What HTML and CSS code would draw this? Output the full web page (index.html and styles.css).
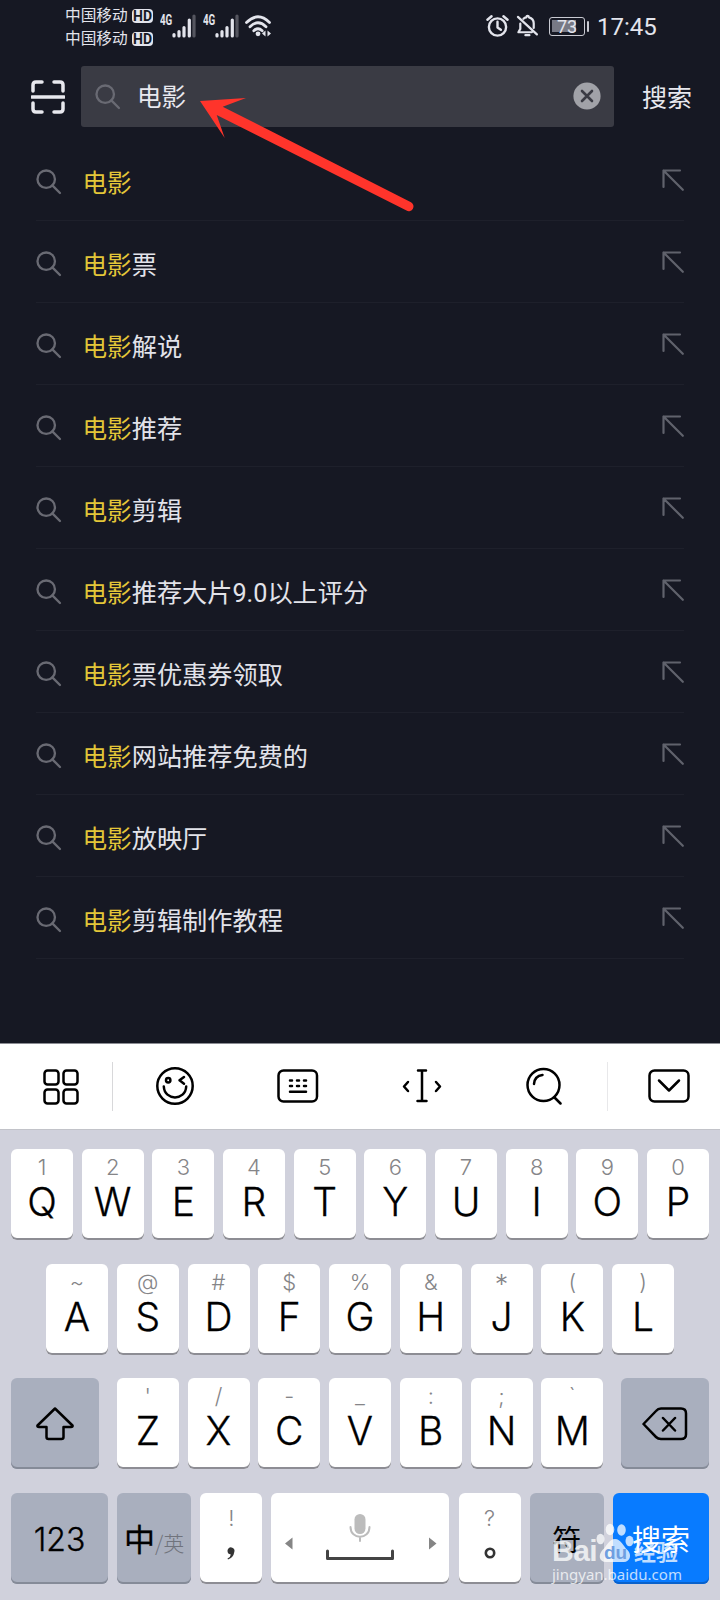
FILE: index.html
```html
<!DOCTYPE html>
<html lang="zh-CN">
<head>
<meta charset="utf-8">
<title>搜索</title>
<link rel="stylesheet" href="styles.css">
</head>
<body>
<svg class="defs" aria-hidden="true">
  <symbol id="mag" viewBox="0 0 28 28"><circle cx="11" cy="11" r="9.4"/><path d="M17.6 17.6L25.8 25.8"/></symbol>
  <symbol id="fill" viewBox="0 0 22 22"><path d="M1.5 18V1.5H18M1.5 1.5L20.8 20.8"/></symbol>
  <symbol id="signal" viewBox="0 0 24 24"><path d="M2 20.5V22M7 17.5V22M12 13.5V22M17.3 6V22"/><path d="M22 2V22" opacity=".3"/></symbol>
</svg>
<div class="phone">
  <header class="status">
    <div class="carriers">
      <div class="carrier">中国移动<span class="hd">HD</span></div>
      <div class="carrier">中国移动<span class="hd">HD</span></div>
    </div>
    <div class="net"><span>4G</span><svg class="signal"><use href="#signal"/></svg></div>
    <div class="net"><span>4G</span><svg class="signal"><use href="#signal"/></svg></div>
    <svg class="wifi" viewBox="0 0 28 24"><path d="M1.5 8.5Q13 -3 24.5 8.5M5 12.7Q13 5 21 12.7M8.8 16.7Q13 12.7 17.2 16.7"/><circle cx="13" cy="19.8" r="2.4"/><path class="solid" d="M20.5 16.5V22.5L17 19.5ZM22.5 16.5V22.5L26 19.5Z"/></svg>
    <svg class="alarm" viewBox="0 0 24 24"><circle cx="12" cy="13" r="9"/><path d="M12 7.5V13.5L15.5 16M1.5 5.5L5.8 1.8M22.5 5.5L18.2 1.8"/></svg>
    <svg class="bell" viewBox="0 0 24 24"><path d="M4.5 9.5V15L2.5 18.5H16.5M7.8 4.4Q9 3.2 10.7 3C11 1 13.2 1 13.5 3C17.5 4 18.5 7 18.5 9.5V14M2 2.5L21.8 20.8M9.8 21.6H14"/></svg>
    <div class="battery">73</div>
    <div class="clock">17:45</div>
  </header>

  <div class="searchbar">
    <svg class="scan" viewBox="0 0 34 34"><path d="M2 11V5Q2 2 5 2H11M23 2H29Q32 2 32 5V11M32 23V29Q32 32 29 32H23M11 32H5Q2 32 2 29V23M1 17H33"/></svg>
    <div class="field">
      <svg class="mag"><use href="#mag"/></svg>
      <span class="query">电影</span>
      <svg class="clear" viewBox="0 0 28 28"><circle cx="14" cy="14" r="13.6"/><path d="M9 9L19 19M19 9L9 19"/></svg>
    </div>
    <span class="go">搜索</span>
  </div>

  <ul class="list">
    <li><svg class="mag"><use href="#mag"/></svg><p><b>电影</b></p><svg class="fill"><use href="#fill"/></svg></li>
    <li><svg class="mag"><use href="#mag"/></svg><p><b>电影</b>票</p><svg class="fill"><use href="#fill"/></svg></li>
    <li><svg class="mag"><use href="#mag"/></svg><p><b>电影</b>解说</p><svg class="fill"><use href="#fill"/></svg></li>
    <li><svg class="mag"><use href="#mag"/></svg><p><b>电影</b>推荐</p><svg class="fill"><use href="#fill"/></svg></li>
    <li><svg class="mag"><use href="#mag"/></svg><p><b>电影</b>剪辑</p><svg class="fill"><use href="#fill"/></svg></li>
    <li><svg class="mag"><use href="#mag"/></svg><p><b>电影</b>推荐大片9.0以上评分</p><svg class="fill"><use href="#fill"/></svg></li>
    <li><svg class="mag"><use href="#mag"/></svg><p><b>电影</b>票优惠券领取</p><svg class="fill"><use href="#fill"/></svg></li>
    <li><svg class="mag"><use href="#mag"/></svg><p><b>电影</b>网站推荐免费的</p><svg class="fill"><use href="#fill"/></svg></li>
    <li><svg class="mag"><use href="#mag"/></svg><p><b>电影</b>放映厅</p><svg class="fill"><use href="#fill"/></svg></li>
    <li><svg class="mag"><use href="#mag"/></svg><p><b>电影</b>剪辑制作教程</p><svg class="fill"><use href="#fill"/></svg></li>
  </ul>

  <div class="tools">
    <div class="tool first"><svg width="36" height="36" viewBox="0 0 36 36"><rect x="1.5" y="1.5" width="14" height="14" rx="3"/><rect x="20.5" y="1.5" width="14" height="14" rx="3"/><rect x="1.5" y="20.5" width="14" height="14" rx="3"/><rect x="20.5" y="20.5" width="14" height="14" rx="3"/></svg></div>
    <div class="tool"><svg width="38" height="38" viewBox="0 0 38 38"><circle cx="19" cy="19" r="17.7"/><path d="M7.8 19.5C8.5 34 29.5 34 30.2 19.5M28 10L23.5 13.3L28 16.7"/><circle class="dot" cx="12.2" cy="13.3" r="2.2"/></svg></div>
    <div class="tool"><svg width="42" height="34" viewBox="0 0 42 34"><rect x="1.5" y="1.5" width="38.5" height="31" rx="5"/><path d="M13 11.5H15M20 11.5H22M27 11.5H29M13 17H15M20 17H22M27 17H29M13 22.7H29"/></svg></div>
    <div class="tool"><svg width="40" height="34" viewBox="0 0 40 34"><path d="M16 1.5H24M20 1.5V32M15.5 32H24.5M6 13L2 17.5L6 22M34 13L38 17.5L34 22"/></svg></div>
    <div class="tool"><svg width="36" height="38" viewBox="0 0 36 38"><circle cx="17.5" cy="18" r="16"/><path d="M28.5 30.5L34.5 36.5M8 17Q8.5 9 16.5 8"/></svg></div>
    <div class="tool last"><svg width="42" height="34" viewBox="0 0 42 34"><rect x="1.5" y="1.5" width="39" height="31" rx="5"/><path d="M11 11.5L21 21.5L31 11.5"/></svg></div>
  </div>

  <div class="keyboard">
    <div class="row">
      <div class="key"><i>1</i>Q</div><div class="key"><i>2</i>W</div><div class="key"><i>3</i>E</div><div class="key"><i>4</i>R</div><div class="key"><i>5</i>T</div><div class="key"><i>6</i>Y</div><div class="key"><i>7</i>U</div><div class="key"><i>8</i>I</div><div class="key"><i>9</i>O</div><div class="key"><i>0</i>P</div>
    </div>
    <div class="row">
      <div class="key"><i>~</i>A</div><div class="key"><i>@</i>S</div><div class="key"><i>#</i>D</div><div class="key"><i>$</i>F</div><div class="key"><i>%</i>G</div><div class="key"><i>&amp;</i>H</div><div class="key"><i class="star">*</i>J</div><div class="key"><i>(</i>K</div><div class="key"><i>)</i>L</div>
    </div>
    <div class="row spread">
      <div class="key gray wide"><svg width="38" height="34" viewBox="0 0 38 34"><path d="M19 1.5L36.5 18.5Q37 20 35 20H27.5V30Q27.5 32 25.5 32H12.5Q10.5 32 10.5 30V20H3Q1 20 1.5 18.5Z"/></svg></div>
      <div class="row">
        <div class="key"><i>'</i>Z</div><div class="key"><i>/</i>X</div><div class="key"><i>-</i>C</div><div class="key"><i>_</i>V</div><div class="key"><i>:</i>B</div><div class="key"><i>;</i>N</div><div class="key"><i>`</i>M</div>
      </div>
      <div class="key gray wide"><svg width="46" height="34" viewBox="0 0 46 34"><path d="M1.5 17L14 4Q16 1.5 19 1.5H39Q44 1.5 44 6.5V27.5Q44 32 39 32H19Q16 32 14 30Z M21 11L33 23.5M33 11L21 23.5"/></svg></div>
    </div>
    <div class="row spread">
      <div class="key gray num">123</div>
      <div class="key gray lang"><span>中</span><small>/英</small></div>
      <div class="key punct"><i>!</i><svg width="10" height="14" viewBox="0 0 10 14"><path class="ink" d="M1.5 4A3.5 3.5 0 1 1 8.3 5Q7.5 10.5 2 12.5L1.5 11.5Q4.8 9.8 4.8 7.5Q1.5 7 1.5 4Z"/></svg></div>
      <div class="key space">
        <svg width="162" height="56" viewBox="0 0 162 56"><path class="tri" d="M0 32.5L7.5 26.5V38.5ZM151.5 32.5L144 26.5V38.5Z"/><rect class="mic" x="69.5" y="3" width="11" height="20" rx="5.5"/><path class="stand" d="M65.5 16C65.5 29 84.5 29 84.5 16M75 26V30"/><path class="bar" d="M42.5 40V47.5H107.500V40"/></svg>
      </div>
      <div class="key punct"><i>?</i><svg width="12" height="12" viewBox="0 0 12 12"><circle class="ring" cx="6" cy="6" r="4.2"/></svg></div>
      <div class="key gray sym">符</div>
      <div class="key blue">搜索</div>
    </div>
  </div>

  <svg class="pointer" viewBox="0 0 220 120"><path d="M2 6L48 3L24.7 11.7L213 107.3A4.7 4.7 0 0 1 208.5 115.6L18.7 20L26.7 43Z"/></svg>

  <div class="mark">
    <div class="brand"><span class="bai">Bai</span><svg width="38" height="40" viewBox="0 0 38 40"><ellipse cx="4.5" cy="16" rx="4" ry="5.2"/><ellipse cx="14" cy="6.5" rx="4.3" ry="5.8"/><ellipse cx="25.5" cy="7" rx="4.3" ry="5.8"/><ellipse cx="33.5" cy="18" rx="4" ry="5.2"/><path d="M19 16C25 16 27 23 31.5 27C36.5 32 33.5 39 28 39H10C3 39 2 32 6.5 27C11 23 13 16 19 16Z"/><text x="8" y="36">du</text></svg><span class="cn">经验</span></div>
    <div class="url">jingyan.baidu.com</div>
  </div>
</div>
</body>
</html>
```
FILE: styles.css
```css
* { box-sizing: border-box; }
body { margin: 0; font-family: Roboto, "Noto Sans CJK SC", sans-serif; }
svg { display: block; fill: none; stroke: currentColor; stroke-linecap: round; stroke-linejoin: round; flex: none; }
.defs { display: none; }
.phone { position: relative; width: 720px; height: 1600px; overflow: hidden; background: #161823; display: flex; flex-direction: column; }

.status { height: 66px; padding-left: 65px; display: flex; align-items: flex-start; color: #e3e4ec; }
.carriers { width: 88px; padding-top: 4px; }
.carrier { height: 23px; line-height: 23px; font-size: 15.7px; display: flex; align-items: center; justify-content: space-between; white-space: nowrap; }
.hd { width: 21px; height: 14px; border-radius: 4px; background: #e3e4ec; color: #161823; font: bold 14px/14px Roboto, sans-serif; text-align: center; }
.net { display: flex; margin: 14px 0 0 7px; width: 36px; }
.net span { width: 12px; font: bold 14px/13px Roboto, sans-serif; transform: scaleX(.7); transform-origin: 0 0; }
.net + .net { margin-left: 7px; }
.signal { width: 24px; height: 24px; stroke-width: 3.2; }
.wifi { width: 28px; height: 24px; margin: 14px 0 0 6px; stroke-width: 2.8; }
.wifi circle, .wifi .solid { fill: currentColor; stroke: none; }
.alarm { width: 23px; height: 24px; margin: 14px 0 0 213px; stroke-width: 2.5; }
.bell { width: 23px; height: 24px; margin: 14px 0 0 7px; stroke-width: 2.3; }
.battery { position: relative; width: 36px; height: 19px; margin: 17px 0 0 10px; border: 1.5px solid #c9cad2; border-radius: 3px; background: linear-gradient(90deg, #777985 0 24px, transparent 24px) 2px 2px / 31px 12px no-repeat; font-size: 18px; line-height: 18px; text-align: center; }
.battery::after { content: ""; position: absolute; left: 37px; top: 3px; width: 2px; height: 11px; border-radius: 1px; background: #c9cad2; }
.clock { margin: 12px 0 0 12px; font-size: 24px; line-height: 30px; }

.searchbar { height: 61px; display: flex; align-items: center; padding-left: 30.5px; color: #e8e8ee; }
.scan { width: 34px; height: 34px; stroke-width: 3.5; }
.field { width: 533px; height: 61px; margin-left: 16.5px; padding: 0 13px 0 14px; display: flex; align-items: center; background: #3a3b44; border-radius: 3px; }
.mag { width: 26px; height: 26px; stroke-width: 2.5; color: #696a73; }
.query { flex: 1; margin-left: 16px; font-size: 24.5px; line-height: 34px; padding-top: 3px; }
.clear { width: 28px; height: 28px; margin-top: -2px; color: #3a3b44; stroke-width: 2.6; }
.clear circle { fill: #a1a2a8; stroke: none; }
.go { margin-left: 28px; font-size: 25px; line-height: 34px; margin-top: 4px; }

.list { list-style: none; margin: 12px 36px 0; padding: 0; }
.list li { height: 82px; display: flex; align-items: center; border-bottom: 1px solid #1e202b; color: #e2e3ea; }
.list .mag { margin-top: 4px; }
.list p { flex: 1; margin: 9px 0 0 20.5px; font-size: 25.2px; line-height: 36px; }
.list b { font-weight: 400; font-size: 24.6px; color: #e3c638; }
.list .fill { width: 22px; height: 22px; stroke-width: 2.2; color: #60626c; margin: 1px 0 0; }

.tools { margin-top: auto; height: 86px; flex: none; display: grid; grid-template-columns: 113px 123px 123px 125px 123px 113px; background: #fff; border-top: 1px solid #8b8c93; color: #000; }
.tool { display: flex; align-items: center; justify-content: center; stroke-width: 2.5; position: relative; padding-bottom: 2px; }
.tool:nth-child(5) { padding-right: 3px; }
.tool.first { padding-left: 9px; padding-bottom: 0; }
.tool.last { padding-left: 10px; }
.tool.first::after, .tool.last::after { content: ""; position: absolute; top: 18px; width: 1px; height: 49px; background: #d8d8da; }
.tool.first::after { right: 0; }
.tool.last::after { left: 0; background: #e8e8ea; }

.keyboard { height: 471px; flex: none; padding: 19px 11px 0; background: #d0d1dc; border-top: 1px solid #c2c3c9; display: flex; flex-direction: column; gap: 23.7px; }
.row { display: flex; justify-content: center; gap: 8.75px; }
.row.spread { justify-content: space-between; gap: 0; }
.key { width: 62px; height: 91px; padding-top: 5px; border-radius: 6px; background: #fff; box-shadow: inset 0 -2px 0 #8d8d94; color: #000; font: 300 39px/42px Inter, "Noto Sans CJK SC", sans-serif; -webkit-text-stroke: .3px; text-align: center; }
.key i { display: block; height: 27px; font: 300 22px/27px Inter, sans-serif; color: #858588; -webkit-text-stroke: 0; }
.key .star { font-size: 27px; line-height: 32px; }
.key.gray { background: #a9afbe; box-shadow: inset 0 -2px 0 #858b98; padding: 0; display: flex; align-items: center; justify-content: center; }
.key.wide { width: 88px; stroke-width: 2.5; }
.key.num { width: 97px; font-size: 32px; padding-top: 2px; }
.key.lang { width: 74px; font-family: "Noto Sans CJK SC", sans-serif; font-weight: 400; font-size: 31px; padding-bottom: 2px; }
.key.lang small { font-size: 21px; font-weight: 300; color: #70737c; padding-top: 9px; -webkit-text-stroke: 0; }
.key.punct { display: flex; flex-direction: column; align-items: center; padding-top: 12px; }
.key.punct i { margin-bottom: 15px; }
.ink { fill: #333; stroke: none; }
.ring { stroke: #333; stroke-width: 2.6; }
.key.space { width: 178px; padding: 18px 0 0 14px; }
.tri { fill: #858585; stroke: none; }
.mic { fill: #bcbcbc; stroke: none; }
.stand { stroke: #bcbcbc; stroke-width: 2; }
.bar { stroke: #444; stroke-width: 3; }
.key.sym { width: 74px; font: 400 29px/40px "Noto Sans CJK SC", sans-serif; padding-bottom: 2px; -webkit-text-stroke: 0; }
.key.blue { width: 96px; background: #087bff; box-shadow: inset 0 -2px 0 #0961cb; color: #fff; font: 400 29px/91px "Noto Sans CJK SC", sans-serif; padding: 0; -webkit-text-stroke: 0; }

.pointer { position: absolute; left: 198px; top: 95px; width: 220px; height: 120px; fill: #ff342b; stroke: none; }
.mark { position: absolute; left: 552px; top: 1522px; color: rgba(255,255,255,.75); }
.brand { display: flex; align-items: flex-end; height: 41px; }
.bai { width: 43px; font: bold 30px/24px "Liberation Sans", sans-serif; letter-spacing: -.5px; }
.brand svg { fill: currentColor; stroke: none; margin-left: 1px; }
.brand text { fill: #6f9fe0; font: bold 19px "Liberation Sans", sans-serif; }
.brand .cn { font: 700 22px/26px "Noto Sans CJK SC", sans-serif; margin-left: 0; }
.url { font: 15px/22px "Noto Sans", sans-serif; }
```
